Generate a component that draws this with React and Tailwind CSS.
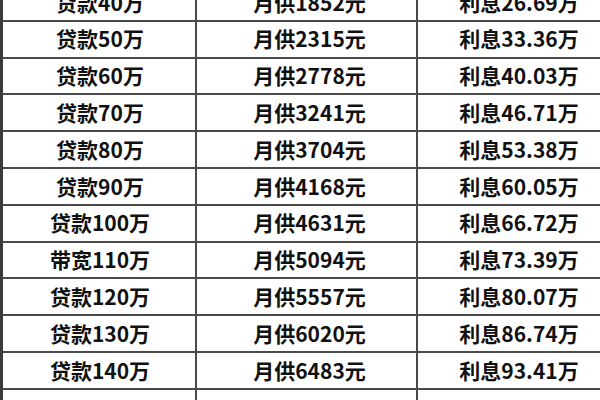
import React from 'react';

const rows = [
  { loan: '贷款40万', monthly: '月供1852元', interest: '利息26.69万' },
  { loan: '贷款50万', monthly: '月供2315元', interest: '利息33.36万' },
  { loan: '贷款60万', monthly: '月供2778元', interest: '利息40.03万' },
  { loan: '贷款70万', monthly: '月供3241元', interest: '利息46.71万' },
  { loan: '贷款80万', monthly: '月供3704元', interest: '利息53.38万' },
  { loan: '贷款90万', monthly: '月供4168元', interest: '利息60.05万' },
  { loan: '贷款100万', monthly: '月供4631元', interest: '利息66.72万' },
  { loan: '带宽110万', monthly: '月供5094元', interest: '利息73.39万' },
  { loan: '贷款120万', monthly: '月供5557元', interest: '利息80.07万' },
  { loan: '贷款130万', monthly: '月供6020元', interest: '利息86.74万' },
  { loan: '贷款140万', monthly: '月供6483元', interest: '利息93.41万' },
  { loan: '', monthly: '', interest: '' },
];

const App = () => {
  return (
    <div className="w-[600px] h-[400px] overflow-hidden bg-white">
      {/* table starts above the visible area */}
      <div className="-mt-[15px] w-[620px] border-l-[3px] border-[#3a3a3a] font-['Noto_Sans_CJK_SC',sans-serif] font-bold text-[21px] text-[#111]">
        {rows.map((row, i) => (
          <div
            key={i}
            className="grid grid-cols-[194px_221px_202px] h-[36.8px] border-b-2 border-[#4a4a4a]"
          >
            <div className="flex items-center justify-center border-r-2 border-[#4a4a4a] pl-[2px]">
              {row.loan}
            </div>
            <div className="flex items-center justify-center border-r-2 border-[#4a4a4a] pl-[6px]">
              {row.monthly}
            </div>
            <div className="flex items-center justify-center">
              {row.interest}
            </div>
          </div>
        ))}
      </div>
    </div>
  );
};

export default App;
